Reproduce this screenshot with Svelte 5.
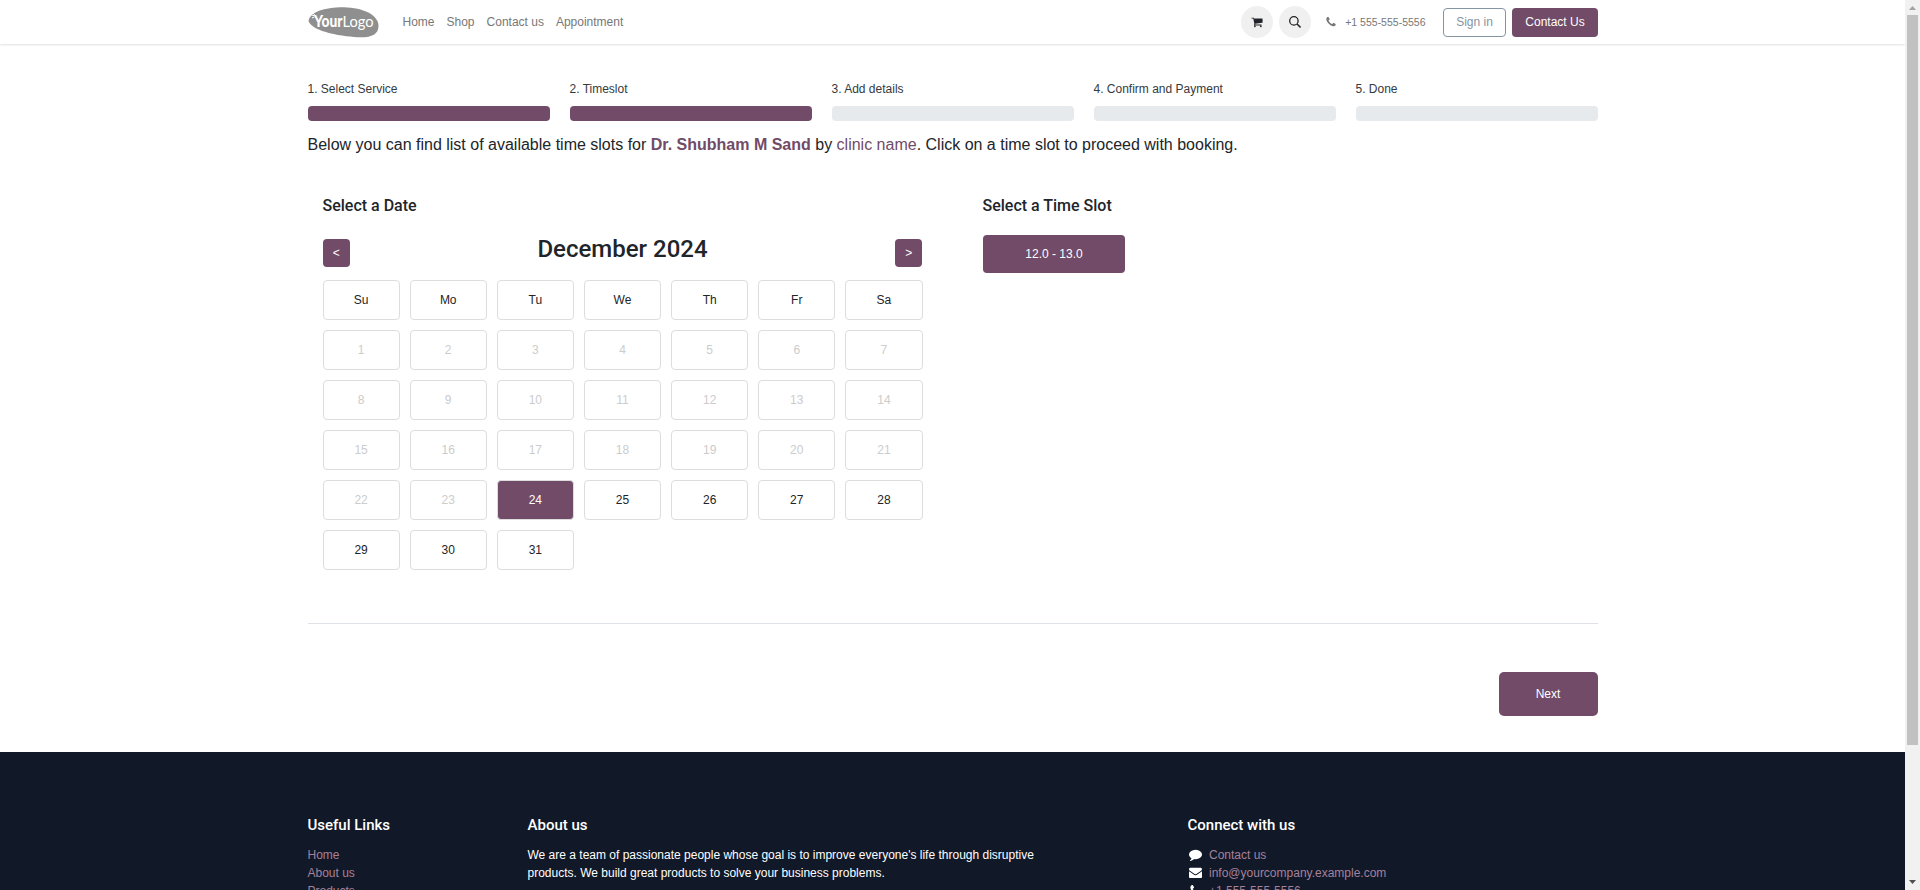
<script>
  const steps = ['1. Select Service', '2. Timeslot', '3. Add details', '4. Confirm and Payment', '5. Done'];
  const weekdays = ['Su', 'Mo', 'Tu', 'We', 'Th', 'Fr', 'Sa'];
  const days = Array.from({ length: 31 }, (_, i) => i + 1);
  const today = 24;
  let selected = $state(24);

  const phonePath =
    'M1600 1240q0 27-10 70.5t-21 68.5q-21 50-122 106-94 51-186 51-27 0-53-3.5t-57.5-12.5-47-14.5-55.5-20.5-49-18q-98-35-175-83-127-79-264-216t-216-264q-48-77-83-175-3-9-18-49t-20.5-55.5-14.5-47-12.5-57.5-3.5-53q0-92 51-186 56-101 106-122 25-11 68.5-21t70.5-10q14 0 21 3 18 6 53 76 11 19 30 54t35 63.5 31 53.5q3 4 17.5 25t21.5 35.5 7 28.5q0 20-28.5 50t-62 55-62 53-28.5 46q0 9 5 22.5t8.5 20.5 14 24 11.5 19q76 137 174 235t235 174q2 1 19 11.5t24 14 20.5 8.5 22.5 5q18 0 46-28.5t53-62 55-62 50-28.5q14 0 28.5 7t35.5 21.5 25 17.5q25 15 53.5 31t63.5 35 54 30q70 35 76 53 3 7 3 21z';
  const contacts = [
    {
      label: 'Contact us',
      icon: 'M1792 896q0 174-120 321.5t-326 233-450 85.5q-70 0-145-8-198 175-460 242-49 14-114 22-17 2-30.5-9t-17.5-29v-1q-3-4-.5-12t2-10 4.5-9.5l6-9 7-8.5 8-9q7-8 31-34.5t34.5-38 31-39.5 32.5-51 27-59 26-76q-157-89-247.5-220t-90.5-281q0-130 71-248.5t191-204.5 286-136.5 348-50.5q244 0 450 85.5t326 233 120 321.5z'
    },
    {
      label: 'info@yourcompany.example.com',
      icon: 'M1792 710v794q0 66-47 113t-113 47h-1472q-66 0-113-47t-47-113v-794q44 49 101 87 362 246 497 345 57 42 92.5 65.5t94.5 48 110 24.5h2q51 0 110-24.5t94.5-48 92.5-65.5q170-123 498-345 57-39 100-87zm0-294q0 79-49 151t-122 123q-376 261-468 325-10 7-42.5 31t-54 38.5-52 32.5-57.5 27-50 9h-2q-23 0-50-9t-57.5-27-52-32.5-54-38.5-42.5-31q-91-64-262-182.5t-205-142.5q-62-42-117-115.5t-55-136.5q0-78 41.5-130t118.5-52h1472q65 0 112.5 47t47.5 113z'
    },
    { label: '+1 555-555-5556', icon: phonePath }
  ];
</script>

<div class="window">
  <div class="page">
    <header>
      <div class="container bar">
        <svg class="logo" width="71" height="31" viewBox="0 0 71 31">
          <path d="M0.5 14C2 5 16 0.2 36 0.3C55 0.6 70.5 8 70.5 19C70.5 27 64 30.3 53 30.3C36 30 4 25 0.5 14Z" fill="#8f8f8f" />
          <path d="M3.4 8l3.2.8M4 11l2.4-1M5.4 6.4l1.4 1.8" stroke="#fff" stroke-width="1" />
          <text x="6" y="20" class="logo-bold" textLength="28.5" lengthAdjust="spacingAndGlyphs">Your</text>
          <text x="34.6" y="20" class="logo-thin" textLength="31" lengthAdjust="spacingAndGlyphs">Logo</text>
        </svg>
        <nav>
          <a href="#home">Home</a>
          <a href="#shop">Shop</a>
          <a href="#contact">Contact us</a>
          <a href="#appointment">Appointment</a>
        </nav>
        <div class="actions">
          <span class="round">
            <svg width="12" height="12" viewBox="0 0 1792 1792" fill="#212529"><path d="M704 1536q0 52-38 90t-90 38-90-38-38-90 38-90 90-38 90 38 38 90zm896 0q0 52-38 90t-90 38-90-38-38-90 38-90 90-38 90 38 38 90zm128-1088v512q0 24-16.5 42.5t-40.5 21.5l-1044 122q13 60 13 70 0 16-24 64h920q26 0 45 19t19 45-19 45-45 19h-1024q-26 0-45-19t-19-45q0-11 8-31.5t16-36 21.5-40 15.5-29.5l-177-823h-204q-26 0-45-19t-19-45 19-45 45-19h256q16 0 28.5 6.5t19.5 15.5 13 24.5 8 26 5.5 29.5 4.5 26h1201q26 0 45 19t19 45z" /></svg>
          </span>
          <span class="round">
            <svg width="12" height="12" viewBox="0 0 12 12" fill="none" stroke="#212529"><circle cx="4.9" cy="4.9" r="4.2" stroke-width="1.3" /><path d="M8 8l3.6 3.4" stroke-width="1.6" /></svg>
          </span>
          <span class="phone">
            <svg width="12" height="12" viewBox="0 0 1792 1792" fill="#777"><path d={phonePath} /></svg>
            <span>+1 555-555-5556</span>
          </span>
          <button class="btn signin">Sign in</button>
          <button class="btn primary contact">Contact Us</button>
        </div>
      </div>
    </header>

    <main class="container">
      <div class="steps">
        {#each steps as step, i}
          <div class="step">
            <span>{step}</span>
            <div class="track" class:done={i < 2}></div>
          </div>
        {/each}
      </div>
      <p class="intro">
        Below you can find list of available time slots for <b>Dr. Shubham M Sand</b> by <a href="#clinic">clinic name</a>. Click on a time slot to proceed with booking.
      </p>

      <div class="columns">
        <section class="date">
          <h5>Select a Date</h5>
          <div class="month">
            <button class="btn primary arrow">&lt;</button>
            <h3>December 2024</h3>
            <button class="btn primary arrow">&gt;</button>
          </div>
          <div class="calendar">
            {#each weekdays as day}
              <div class="cell">{day}</div>
            {/each}
            {#each days as day}
              <button class="cell" class:past={day < today} class:selected={day === selected} disabled={day < today} onclick={() => (selected = day)}>{day}</button>
            {/each}
          </div>
        </section>
        <section class="slots">
          <h5>Select a Time Slot</h5>
          <button class="btn primary slot">12.0 - 13.0</button>
        </section>
      </div>

      <div class="next-row">
        <button class="btn primary next">Next</button>
      </div>
    </main>

    <footer>
      <div class="container foot">
        <div class="links">
          <h6>Useful Links</h6>
          <a href="#home">Home</a>
          <a href="#about">About us</a>
          <a href="#products">Products</a>
        </div>
        <div class="about">
          <h6>About us</h6>
          <p>We are a team of passionate people whose goal is to improve everyone's life through disruptive<br />products. We build great products to solve your business problems.</p>
        </div>
        <div class="connect">
          <h6>Connect with us</h6>
          {#each contacts as item}
            <a href="#contact">
              <svg width="13" height="13" viewBox="0 0 1792 1792" fill="#fff"><path d={item.icon} /></svg>
              {item.label}
            </a>
          {/each}
        </div>
      </div>
    </footer>
  </div>

  <div class="scrollbar">
    <svg width="15" height="15" viewBox="0 0 15 15"><path d="M4 10L7.5 6L11 10Z" fill="#a3a3a3" /></svg>
    <div class="thumb"></div>
    <svg width="15" height="15" viewBox="0 0 15 15"><path d="M4 5L7.5 9L11 5Z" fill="#505050" /></svg>
  </div>
</div>

<style>
  :global(body) {
    margin: 0;
    overflow: hidden;
  }
  .window {
    display: flex;
    height: 890px;
    overflow: hidden;
    background: #fff;
    color: #212529;
    font: 12px/18px 'Liberation Sans', Arial, sans-serif;
  }
  .window * {
    box-sizing: border-box;
  }
  .page {
    flex: 1;
    min-width: 0;
    display: flex;
    flex-direction: column;
  }
  .container {
    width: 1290px;
    margin-left: 307.5px;
  }
  a {
    text-decoration: none;
  }
  h3, h5, h6, p {
    margin: 0;
  }
  h3, h5, h6 {
    font-family: Roboto, sans-serif;
    font-weight: 500;
  }
  h5 {
    font-size: 16px;
    line-height: 19px;
  }
  header {
    flex: none;
    height: 44px;
    box-shadow: 0 1px 2px rgba(0, 0, 0, 0.12);
  }
  .bar {
    height: 44px;
    display: flex;
    align-items: center;
  }
  .logo {
    flex: none;
    margin-right: -0.5px;
  }
  .logo text {
    fill: #fff;
  }
  .logo-bold {
    font: 900 16px Lato, sans-serif;
  }
  .logo-thin {
    font: 400 16px Lato, sans-serif;
  }
  nav {
    display: flex;
    gap: 12px;
    margin-left: 24.5px;
  }
  nav a, .phone {
    color: #777;
  }
  .actions {
    display: flex;
    align-items: center;
    margin-left: auto;
  }
  .round {
    width: 32px;
    height: 32px;
    margin-right: 6px;
    border-radius: 50%;
    background: #f0f0f0;
    display: flex;
    align-items: center;
    justify-content: center;
  }
  .phone {
    display: flex;
    align-items: center;
    gap: 8.5px;
    margin: 0 17px 0 7.5px;
    font-size: 10.5px;
  }
  .btn {
    border: 0;
    padding: 0;
    border-radius: 4px;
    font: 12px/18px 'Liberation Sans', Arial, sans-serif;
    text-align: center;
  }
  .primary {
    background: #714b67;
    color: #fff;
  }
  .signin {
    width: 63px;
    height: 29px;
    padding-left: 1px;
    border: 1px solid #8595a2;
    background: #fff;
    color: #8595a2;
    margin-right: 6px;
  }
  .contact {
    width: 86px;
    height: 29px;
    padding-left: 1px;
  }
  .steps {
    display: grid;
    grid-template-columns: repeat(5, 242px);
    column-gap: 20px;
    padding-top: 36px;
  }
  .step {
    display: flex;
    flex-direction: column;
    gap: 8px;
    color: #343a40;
  }
  .track {
    height: 15px;
    border-radius: 4px;
    background: #e7eaed;
  }
  .track.done {
    background: #714b67;
  }
  .intro {
    margin-top: 12px;
    font-size: 16px;
    line-height: 24px;
  }
  .intro a, .intro b {
    color: #714b67;
  }
  .columns {
    display: flex;
    height: 467px;
    padding: 39px 15px 0;
    border-bottom: 1px solid #dee2e6;
  }
  .date {
    width: 600px;
  }
  .slots {
    margin-left: 60px;
  }
  .month {
    display: flex;
    justify-content: space-between;
    margin-top: 24px;
  }
  .month h3 {
    font-size: 24px;
    line-height: 29px;
    margin-top: -4px;
  }
  .arrow {
    width: 27.5px;
    height: 28px;
  }
  .calendar {
    display: grid;
    grid-template-columns: repeat(7, 1fr);
    gap: 10px;
    margin-top: 13px;
  }
  .cell {
    height: 40px;
    padding: 0;
    border: 1px solid #ddd;
    border-radius: 4px;
    background: #fff;
    color: #212529;
    font: 12px/38px 'Liberation Sans', Arial, sans-serif;
    text-align: center;
  }
  .cell.past {
    color: #ccc;
  }
  .cell.selected {
    background: #714b67;
    color: #fff;
  }
  .slot {
    display: block;
    width: 142px;
    height: 38px;
    margin-top: 20px;
    padding-left: 1px;
  }
  .next-row {
    display: flex;
    justify-content: flex-end;
    height: 128px;
    padding-top: 48px;
  }
  .next {
    width: 99px;
    height: 44px;
    border-radius: 5px;
  }
  footer {
    flex: none;
    height: 138px;
    overflow: hidden;
    background: #111827;
    color: #fff;
  }
  .foot {
    display: grid;
    grid-template-columns: 220px 660px 1fr;
    padding-top: 64px;
  }
  h6 {
    font-size: 15px;
    line-height: 18px;
    margin-bottom: 12px;
  }
  .links a, .connect a {
    display: block;
    color: #a5819b;
  }
  .connect a {
    display: flex;
    align-items: center;
    gap: 7px;
    padding-left: 1.5px;
  }
  .connect svg {
    margin-top: -1px;
  }
  .scrollbar {
    flex: none;
    width: 15px;
    display: flex;
    flex-direction: column;
    background: #f1f1f1;
  }
  .scrollbar svg {
    display: block;
    flex: none;
  }
  .thumb {
    width: 11px;
    height: 730px;
    margin: 0 2px auto;
    background: #c1c1c1;
  }
</style>
